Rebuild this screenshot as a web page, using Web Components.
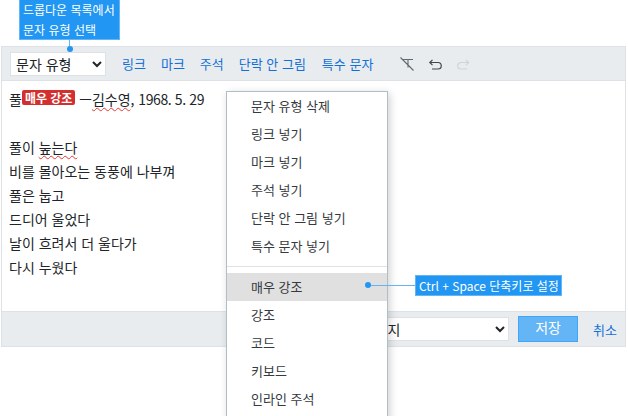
<!DOCTYPE html>
<html lang="ko"><head><meta charset="utf-8">
<style>
html,body{margin:0;padding:0;width:628px;height:416px;overflow:hidden;background:#fff}
body{font:14px/24px "Noto Sans CJK KR","Noto Sans",sans-serif;color:#212529}
</style></head><body>
<doc-editor></doc-editor>
<script>
const kr='"Noto Sans CJK KR","Noto Sans",sans-serif';
class Callout extends HTMLElement{
 constructor(){super();this.attachShadow({mode:'open'}).innerHTML=`<style>
 :host{display:block;position:absolute;background:#2196f3;color:#fff;border:1px solid #64b5f6;box-sizing:border-box;font:12px/20px ${kr};padding:0 3px;white-space:nowrap}
 </style><slot></slot>`}
}
customElements.define('x-callout',Callout);
class EditorToolbar extends HTMLElement{
 constructor(){super();this.attachShadow({mode:'open'}).innerHTML=`<style>
 :host{display:flex;align-items:center;height:33px;background:#e9ecef;border-bottom:1px solid #dee2e6;padding-left:8px;font:13px/16px ${kr}}
 select{width:96px;height:24px;margin:0;border:1px solid #dee2e6;background:#fff;font:14px ${kr};color:#212529;padding:0 0 0 1px;border-radius:0}
 a{color:#1070d8;text-decoration:none;margin-left:15px;white-space:nowrap}
 a:first-of-type{margin-left:16px}
 a:last-of-type{margin-left:16px}
 svg{display:block;flex:none}
 .clear{margin-left:26px}.undo{margin-left:12px}.redo{margin-left:12px}
 </style>
 <select><option>문자 유형</option></select>
 <a>링크</a><a>마크</a><a>주석</a><a>단락 안 그림</a><a>특수 문자</a>
 <svg class="clear" width="16" height="16" viewBox="0 0 16 16" fill="none" stroke="#5f6870" stroke-width="1.1"><path d="M4 3.5h10M9 3.5v8M1.5 1.5l13 13"/></svg>
 <svg class="undo" width="16" height="16" viewBox="0 0 16 16" fill="none" stroke="#3f464d" stroke-width="1.2"><path d="M3 6.5h8a3 3 0 0 1 0 6.5H5M5.5 3.8 2.8 6.5l2.7 2.7"/></svg>
 <svg class="redo" width="16" height="16" viewBox="0 0 16 16" fill="none" stroke="#ced4da" stroke-width="1.2"><path d="M13.5 6.5H6a3 3 0 0 0 0 6.5H12M11 3.8l2.7 2.7-2.7 2.7"/></svg>`}
}
customElements.define('editor-toolbar',EditorToolbar);
class EditorBody extends HTMLElement{
 constructor(){super();this.attachShadow({mode:'open'}).innerHTML=`<style>
 :host{display:block;height:230px;box-sizing:border-box;padding:6px 7px 0;font:14px/24px ${kr};color:#212529;background:#fff;overflow:hidden}
 p{margin:0;height:24px;white-space:nowrap}
 .strong{display:inline-block;background:#d32f2f;color:#fff;font-size:12px;line-height:15px;padding:0 3px;border-radius:2px;font-weight:700;vertical-align:2px}
 .sp{text-decoration:underline wavy #e53935 1px;text-underline-offset:2px}
 .date{letter-spacing:-.4px}
 </style>
 <p>풀<span class="strong">매우 강조</span> —<span class="sp">김수영</span>, <span class="date">1968. 5. 29</span></p><p></p>
 <p>풀이 <span class="sp">눞는다</span></p><p>비를 몰아오는 동풍에 나부껴</p><p>풀은 눕고</p><p>드디어 울었다</p><p>날이 흐려서 더 울다가</p><p>다시 누웠다</p>`}
}
customElements.define('editor-body',EditorBody);
class EditorFooter extends HTMLElement{
 constructor(){super();this.attachShadow({mode:'open'}).innerHTML=`<style>
 :host{display:flex;align-items:center;justify-content:flex-end;height:34px;background:#e9ecef;border-top:1px solid #dee2e6;font:13px ${kr}}
 select{width:200px;height:24px;margin:0 9px 0 0;border:1px solid #dee2e6;background:#fff;font:14px ${kr};color:#212529;padding:0 0 0 18px;border-radius:0}
 button{width:60px;height:26px;margin:0;border:1px solid #42a5f5;background:#64b5f6;color:#fff;font:14px ${kr};padding:0 0 5px;border-radius:0}
 a{color:#1070d8;font-size:13px;margin:0 8px 0 15px;white-space:nowrap}
 </style>
 <select><option>문서 페이지</option></select><button>저장</button><a>취소</a>`}
}
customElements.define('editor-footer',EditorFooter);
class MenuItem extends HTMLElement{
 constructor(){super();this.attachShadow({mode:'open'}).innerHTML=`<style>
 :host{display:block;height:28px;padding-left:24px;font:13px/28px ${kr};color:#343a40;white-space:nowrap}
 :host([active]){background:#e0e0e0}
 </style><slot></slot>`}
}
customElements.define('menu-item',MenuItem);
class PopMenu extends HTMLElement{
 constructor(){super();this.attachShadow({mode:'open'}).innerHTML=`<style>
 :host{display:block;position:absolute;left:226px;top:91px;width:162px;height:340px;box-sizing:border-box;background:#fff;border:1px solid #b0bec5;box-shadow:2px 2px 8px rgba(0,0,0,.18)}
 hr{border:0;border-top:1px solid #dee2e6;margin:6px 0}
 </style>
 <menu-item>문자 유형 삭제</menu-item><menu-item>링크 넣기</menu-item><menu-item>마크 넣기</menu-item><menu-item>주석 넣기</menu-item><menu-item>단락 안 그림 넣기</menu-item><menu-item>특수 문자 넣기</menu-item>
 <hr><menu-item active>매우 강조</menu-item><menu-item>강조</menu-item><menu-item>코드</menu-item><menu-item>키보드</menu-item><menu-item>인라인 주석</menu-item>`}
}
customElements.define('pop-menu',PopMenu);
class DocEditor extends HTMLElement{
 constructor(){super();this.attachShadow({mode:'open'}).innerHTML=`<style>
 :host{display:block;position:relative;width:628px;height:416px;overflow:hidden}
 .frame{position:absolute;left:1px;top:46px;width:625px;border:1px solid #dee2e6;box-sizing:border-box}
 .dot{position:absolute;width:6px;height:6px;border-radius:50%;background:#2196f3}
 .vline{position:absolute;left:69px;top:39px;width:1px;height:10px;background:#64b5f6}
 .hline{position:absolute;left:368px;top:285px;width:48px;height:1px;background:#64b5f6}
 .t1{left:19px;top:-1px;width:101px;height:41px}
 .t2{left:415px;top:275px;height:21px;line-height:19px;padding:0 3px;width:147px}
 </style>
 <div class="frame"><editor-toolbar></editor-toolbar><editor-body></editor-body><editor-footer></editor-footer></div>
 <pop-menu></pop-menu>
 <x-callout class="t1">드롭다운 목록에서<br>문자 유형 선택</x-callout><div class="vline"></div><div class="dot" style="left:67px;top:46px"></div>
 <div class="hline"></div><div class="dot" style="left:365px;top:282px"></div><x-callout class="t2">Ctrl + Space 단축키로 설정</x-callout>`}
}
customElements.define('doc-editor',DocEditor);
</script></body></html>
